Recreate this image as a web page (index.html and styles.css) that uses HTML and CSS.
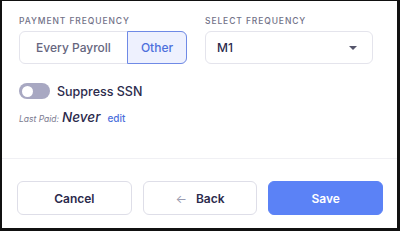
FILE: index.html
```html
<!DOCTYPE html>
<html lang="en">
<head>
    <meta charset="UTF-8">
    <meta name="viewport" content="width=device-width, initial-scale=1.0">
    <title>Payment frequency</title>
    <link rel="stylesheet" href="styles.css">
</head>
<body>
    <div class="modal">
        <div class="content">
            <div class="row">
                <div class="field">
                    <label class="label">PAYMENT FREQUENCY</label>
                    <div class="segment">
                        <button class="seg-btn">Every Payroll</button>
                        <button class="seg-btn active">Other</button>
                    </div>
                </div>
                <div class="field">
                    <label class="label">SELECT FREQUENCY</label>
                    <div class="select">
                        <span>M1</span>
                        <span class="caret"></span>
                    </div>
                </div>
            </div>

            <div class="toggle-row">
                <span class="toggle"><span class="knob"></span></span>
                <span class="toggle-text">Suppress SSN</span>
            </div>

            <div class="last-paid">
                <span class="lp-label">Last Paid:</span>
                <span class="lp-value">Never</span>
                <a class="edit" href="#">edit</a>
            </div>
        </div>

        <div class="footer">
            <button class="btn">Cancel</button>
            <button class="btn"><span class="arrow">&larr;</span> Back</button>
            <button class="btn primary">Save</button>
        </div>
    </div>
</body>
</html>
```

FILE: styles.css
```css
*{
    margin: 0;
    padding: 0;
    box-sizing: border-box;
}

body{
    background-color: #111;
    font-family: 'Inter', 'Noto Sans', sans-serif;
    color: #2b2a4c;
}

.modal{
    background-color: #fff;
    margin: 1px 3px 3px 2px;
    height: 227px;
    display: flex;
    flex-direction: column;
}

.content{
    padding: 15px 24px 0 17px;
    flex: 1;
}

.row{
    display: flex;
    gap: 18px;
}

.field{
    flex: 1;
}

.label{
    display: block;
    font-size: 8.5px;
    font-weight: 500;
    letter-spacing: 0.9px;
    color: #717187;
    margin-bottom: 5px;
}

.segment{
    display: flex;
    height: 33px;
    border: 1px solid #e4e4ec;
    border-radius: 6px;
}

.seg-btn{
    border: none;
    background: none;
    font-family: inherit;
    font-size: 12px;
    font-weight: 500;
    color: #66667e;
    flex: 1;
}

.seg-btn.active{
    flex: 0 0 60px;
    margin: -1px -1px -1px 0;
    background-color: #eef1fe;
    border: 1px solid #6f8ae6;
    border-radius: 0 6px 6px 0;
    color: #4d70dc;
}

.select{
    height: 33px;
    border: 1px solid #e4e4ec;
    border-radius: 6px;
    display: flex;
    align-items: center;
    justify-content: space-between;
    padding: 0 15px 0 11px;
    font-size: 12px;
    font-weight: 500;
    color: #2b2a4c;
}

.caret{
    width: 0;
    height: 0;
    border-left: 4px solid transparent;
    border-right: 4px solid transparent;
    border-top: 4px solid #55556b;
}

.toggle-row{
    display: flex;
    align-items: center;
    gap: 7px;
    margin-top: 19px;
}

.toggle{
    width: 31px;
    height: 16px;
    border-radius: 8px;
    background-color: #a8a8c2;
    display: flex;
    align-items: center;
    padding-left: 3px;
}

.knob{
    width: 11px;
    height: 11px;
    border-radius: 50%;
    background-color: #fff;
}

.toggle-text{
    font-size: 12.5px;
    font-weight: 500;
}

.last-paid{
    margin-top: 10px;
    display: flex;
    align-items: baseline;
    gap: 3px;
}

.lp-label{
    font-size: 8.5px;
    font-style: italic;
    color: #7b7b90;
}

.lp-value{
    font-size: 13.5px;
    font-style: italic;
    font-weight: 500;
    color: #2b2a4c;
}

.edit{
    font-size: 10px;
    font-weight: 500;
    color: #4d70dc;
    text-decoration: none;
    margin-left: 4px;
}

.footer{
    border-top: 1px solid #f0f0f4;
    padding: 22px 14px 13px 15px;
    display: grid;
    grid-template-columns: 1fr 1fr 1fr;
    gap: 11px;
}

.btn{
    height: 34px;
    border: 1px solid #dedee8;
    border-radius: 6px;
    background-color: #fff;
    font-family: inherit;
    font-size: 12px;
    font-weight: 600;
    color: #2b2a4c;
}

.arrow{
    color: #9a9ab0;
    font-weight: 400;
    margin-right: 6px;
}

.btn.primary{
    background-color: #5b82f6;
    border-color: #5b82f6;
    color: #fff;
}
```
